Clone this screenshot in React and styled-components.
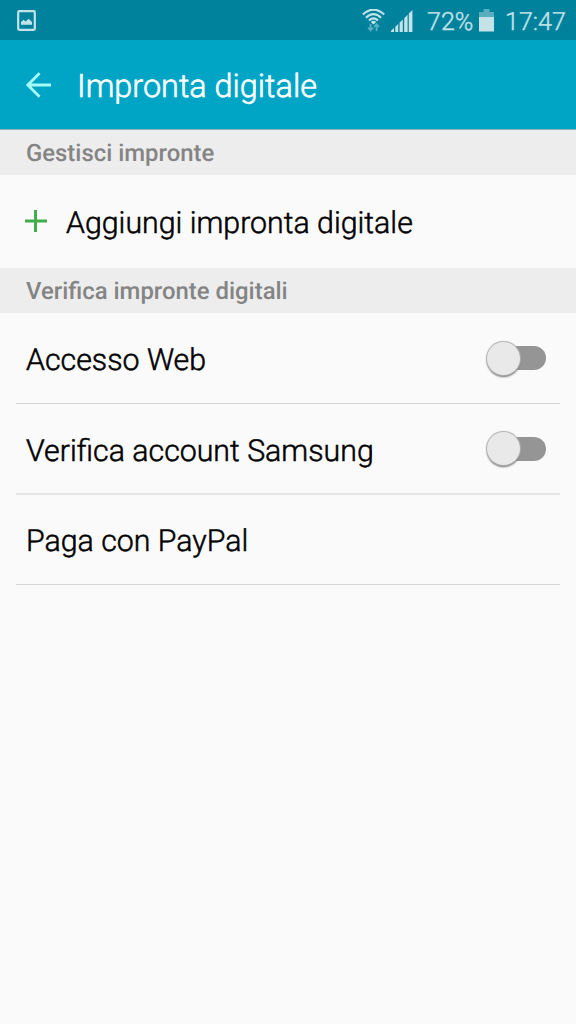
import React, { useState } from 'react';
import styled, { createGlobalStyle } from 'styled-components';

const sections = [
	{
		title: 'Gestisci impronte',
		rows: [ { id: 'add', label: 'Aggiungi impronta digitale', add: true } ]
	},
	{
		title: 'Verifica impronte digitali',
		rows: [
			{ id: 'web', label: 'Accesso Web', toggle: true },
			{ id: 'samsung', label: 'Verifica account Samsung', toggle: true, soft: true },
			{ id: 'paypal', label: 'Paga con PayPal' }
		]
	}
];

const StatusIcons = () => (
	<>
		<svg width='24' height='24' viewBox='0 0 24 24' fill='none'>
			<g stroke='#c3e3e9' strokeWidth='2.1'>
				<path d='M.8 5.6 Q11.5 -4.4 22.2 5.6' />
				<path d='M3.9 8.7 Q11.5 1.6 19.1 8.7' />
				<path d='M7 11.5 Q11.5 7.4 16 11.5' />
			</g>
			<path d='M8.8 13 Q11.5 10.6 14.2 13 L11.5 15.4 Z' fill='#c3e3e9' />
			<path d='M8.6 15v6.5M6.2 18.6L8.6 21.4L11 18.6M14.6 22v-6.5M12.2 18L14.6 15.2L17 18' stroke='#59aebf' strokeWidth='1.9' />
		</svg>
		<Signal width='22' height='22' viewBox='0 0 22 22' fill='#c3e3e9'>
			<path d='M0 22V20.8L3 18V22ZM4.3 22V16.8L7.2 14V22ZM8.6 22V12.6L11.8 9.6V22ZM13.2 22V8.2L16.6 4.8V22ZM17.8 22V3.6L21.4 0V22Z' />
		</Signal>
	</>
);

const App = () => {
	const [ enabled, setEnabled ] = useState({});

	const toggle = (id) => setEnabled(prev => ({ ...prev, [id]: !prev[id] }));

	return (
		<Screen>
			<GlobalStyle />
			<StatusBar>
				<PictureIcon width='20' height='22' viewBox='0 0 20 22' fill='none'>
					<rect x='1.2' y='1.2' width='16.6' height='18.6' rx='1' stroke='#c3e3e9' strokeWidth='2.2' />
					<path d='M4 14.8V12L6.6 9.8L8.6 11.4L11.6 8.8L15 12V14.8Z' fill='#c3e3e9' />
				</PictureIcon>
				<Spacer />
				<StatusIcons />
				<Percent>72%</Percent>
				<Battery width='15' height='23' viewBox='0 0 15 23'>
					<path d='M0 3H4.5V0H10.5V3H15V9H0Z' fill='#59aebf' />
					<path d='M0 8H15V22.5H0Z' fill='#c3e3e9' />
				</Battery>
				<Clock>17:47</Clock>
			</StatusBar>

			<Header>
				<BackIcon width='26' height='26' viewBox='0 0 26 26' fill='none' stroke='#a5fbf8' strokeWidth='2.8'>
					<path d='M26 13H2.5M14.6 1.2L2.8 13L14.6 24.8' />
				</BackIcon>
				<Title>Impronta digitale</Title>
			</Header>

			{ sections.map(section => (
				<section key={ section.title }>
					<SectionTitle>{ section.title }</SectionTitle>
					{ section.rows.map(row => row.add ? (
						<AddRow key={ row.id }>
							<PlusIcon width='22' height='22' viewBox='0 0 22 22' stroke='#42ad4c' strokeWidth='3'>
								<path d='M10.5 0V22M0 11H22' />
							</PlusIcon>
							<Label>{ row.label }</Label>
						</AddRow>
					) : (
						<Row key={ row.id } $soft={ row.soft }>
							<Label>{ row.label }</Label>
							{ row.toggle && (
								<Switch
									role='switch'
									aria-label={ row.label }
									aria-checked={ !!enabled[row.id] }
									onClick={ () => toggle(row.id) }
								>
									<Thumb $on={ enabled[row.id] } />
								</Switch>
							) }
						</Row>
					)) }
				</section>
			)) }
		</Screen>
	);
};

const GlobalStyle = createGlobalStyle`
	body {
		margin: 0;
		background: #fafafa;
		font-family: Roboto, sans-serif;
		text-rendering: geometricPrecision;
	}
`;

const Screen = styled.div`
	min-height: 1024px;
	background: #fafafa;
	color: #000;
`;

const StatusBar = styled.div`
	display: flex;
	align-items: flex-start;
	box-sizing: border-box;
	height: 40px;
	padding: 9px 11px 0 17px;
	background: #00829d;
	color: #c3e3e9;
	font-size: 25.1px;
	font-weight: 300;
	line-height: 27px;
	-webkit-text-stroke: 0.4px;
`;

const PictureIcon = styled.svg`
	margin-top: 1px;
`;

const Spacer = styled.div`
	flex: 1;
`;

const Signal = styled.svg`
	margin: 1px 0 0 5px;
`;

const Percent = styled.span`
	width: 47px;
	margin-left: 14px;
	white-space: nowrap;
`;

const Battery = styled.svg`
	margin-left: 5px;
`;

const Clock = styled.span`
	width: 60px;
	margin-left: 11px;
	white-space: nowrap;
`;

const Header = styled.header`
	display: flex;
	align-items: center;
	box-sizing: border-box;
	height: 90px;
	padding: 0 25px;
	border-bottom: 1px solid #8fb2b9;
	background: #00a5c6;
	color: #fff;
`;

const BackIcon = styled.svg`
	margin-right: 26px;
`;

const Title = styled.h1`
	margin: 3px 0 0;
	font-size: 32.4px;
	font-weight: 300;
	line-height: 40px;
	-webkit-text-stroke: 0.6px;
`;

const SectionTitle = styled.h2`
	box-sizing: border-box;
	height: 45px;
	margin: 0;
	padding: 1px 26px 0;
	background: #ededed;
	color: #848484;
	font-size: 23.9px;
	font-weight: 500;
	line-height: 44px;
`;

const AddRow = styled.div`
	display: flex;
	align-items: center;
	gap: 19px;
	height: 93px;
	padding: 0 25px;
`;

const PlusIcon = styled.svg`
	margin-top: -1px;
`;

const Label = styled.span`
	padding-top: 4px;
	font-size: 30.3px;
	font-weight: 300;
	line-height: 36px;
	-webkit-text-stroke: 0.5px;
`;

const Row = styled.div`
	display: flex;
	align-items: center;
	justify-content: space-between;
	box-sizing: border-box;
	height: 91px;
	margin: 0 16px;
	padding: 0 14px 0 10px;
	border-bottom: ${ ({$soft}) => $soft ? '2px solid #e5e5e5' : '1px solid #d6d6d6' };

	${ Label } {
		padding-top: 6px;
	}

	&:last-child {
		height: 90px;

		${ Label } {
			padding-top: 4px;
		}
	}
`;

const Switch = styled.button`
	display: flex;
	align-items: center;
	width: 59px;
	height: 24px;
	padding: 0;
	border: none;
	border-radius: 12px;
	background: linear-gradient(to right, transparent 15px, #959595 15px);
	cursor: pointer;
`;

const Thumb = styled.span`
	width: 33px;
	height: 33px;
	border-radius: 50%;
	background: #e9e9e9;
	box-shadow: 0 0 1px 1px #b0b0b0, 0 2px 2px #707070;
	transform: translateX(${ ({$on}) => $on ? '27px' : '0' });
`;

export default App;
